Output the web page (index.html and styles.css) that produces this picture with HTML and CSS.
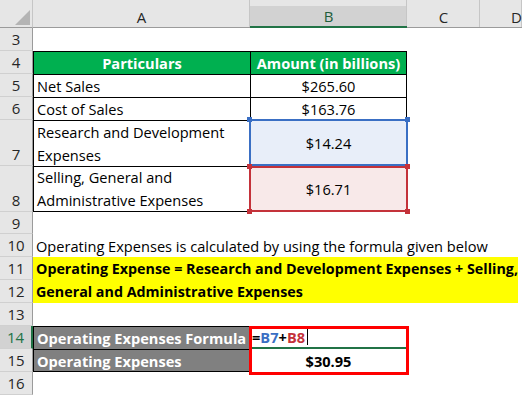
FILE: index.html
```html
<!DOCTYPE html>
<html>
<head>
<meta charset="utf-8">
<link rel="stylesheet" href="styles.css">
</head>
<body>
<div class="sheet">
  <div class="corner"><div class="tri"></div></div>
  <div class="colhead">A</div>
  <div class="colhead sel">B</div>
  <div class="colhead">C</div>
  <div class="colhead last">D</div>

  <div class="rh">3</div><div class="row-empty"></div>

  <div class="rh">4</div>
  <div class="cell th bl bt">Particulars</div>
  <div class="cell th bl bt br">Amount (in billions)</div>
  <div class="filler2"></div>

  <div class="rh">5</div>
  <div class="cell bl bt">Net Sales</div>
  <div class="cell c bl bt br">$265.60</div>
  <div class="filler2"></div>

  <div class="rh">6</div>
  <div class="cell bl bt">Cost of Sales</div>
  <div class="cell c bl bt br">$163.76</div>
  <div class="filler2"></div>

  <div class="rh bottom">7</div>
  <div class="cell wrap bl bt">Research and Development<br>Expenses</div>
  <div class="cell c ref blue">$14.24<i class="h tl"></i><i class="h tr"></i></div>
  <div class="filler2"></div>

  <div class="rh bottom">8</div>
  <div class="cell wrap bl bt bb">Selling, General and<br>Administrative Expenses</div>
  <div class="cell c ref red">$16.71<i class="h tl"></i><i class="h tr"></i><i class="h bl2"></i><i class="h br2"></i></div>
  <div class="filler2"></div>

  <div class="rh">9</div><div class="row-empty"></div>

  <div class="rh">10</div>
  <div class="cell span">Operating Expenses is calculated by using the formula given below</div>

  <div class="rh">11</div>
  <div class="cell span yellow b">Operating Expense = Research and Development Expenses + Selling,</div>
  <div class="rh">12</div>
  <div class="cell span yellow b">General and Administrative Expenses</div>

  <div class="rh">13</div><div class="row-empty"></div>

  <div class="rh active">14</div>
  <div class="cell gray bl bt br">Operating Expenses Formula</div>
  <div class="cell edit"><span class="eq">=</span><span class="rb">B7</span><span class="eq">+</span><span class="rr">B8</span><span class="caret"></span></div>
  <div class="filler2"></div>

  <div class="rh">15</div>
  <div class="cell gray bl bt bb br">Operating Expenses</div>
  <div class="cell c b">$30.95</div>
  <div class="filler2"></div>

  <div class="rh">16</div><div class="row-empty"></div>

  <div class="redbox"></div>
</div>
</body>
</html>
```

FILE: styles.css
```css
html, body {
  margin: 0;
  padding: 0;
  background: #ffffff;
}
body {
  font-family: "Open Sans", "Liberation Sans", sans-serif;
  font-size: 14.6px;
  color: #000;
  width: 522px;
  height: 395px;
  overflow: hidden;
}
.sheet {
  position: relative;
  display: grid;
  grid-template-columns: 33px 217px 157px 73px 42px;
  grid-template-rows: 28px 23px 23px 23px 23px 46px 46px 22px 23px 23px 23px 23px 23px 23px 23px;
}
.corner {
  background: #e6e6e6;
  border-right: 1px solid #c6c6c6;
  border-bottom: 1px solid #9b9b9b;
  box-sizing: border-box;
  position: relative;
}
.tri {
  position: absolute;
  left: 15px;
  top: 10px;
  width: 0;
  height: 0;
  border-left: 15px solid transparent;
  border-bottom: 15px solid #b4b4b4;
}
.colhead {
  background: #e6e6e6;
  border-bottom: 1px solid #9b9b9b;
  box-shadow: inset -1px 0 0 #c6c6c6;
  box-sizing: border-box;
  display: flex;
  align-items: center;
  justify-content: center;
  padding-top: 6px;
  color: #262626;
  font-size: 15px;
}
.colhead.sel {
  background: linear-gradient(#e6e6e6 0 6px, #d2d2d2 6px);
  border-bottom: 2px solid #217346;
  color: #1f5e3b;
}
.colhead.last {
  justify-content: flex-start;
  padding-left: 31px;
}
.rh {
  background: #e6e6e6;
  border-right: 1px solid #9b9b9b;
  border-bottom: 1px solid #d0d0d0;
  box-sizing: border-box;
  display: flex;
  align-items: center;
  justify-content: center;
  color: #262626;
  font-size: 15px;
}
.rh.bottom {
  align-items: flex-end;
  padding-bottom: 1px;
}
.rh.active {
  background: #d2d2d2;
  border-right: 2px solid #217346;
  color: #217346;
}
.row-empty {
  grid-column: 2 / 6;
}
.filler2 {
  grid-column: 4 / 6;
}
.cell {
  box-sizing: border-box;
  display: flex;
  align-items: center;
  padding: 0 3px;
  white-space: nowrap;
  position: relative;
}
.cell.c {
  justify-content: center;
}
.cell.wrap {
  white-space: normal;
  line-height: 23px;
}
.bl { border-left: 1px solid #000; }
.bt { border-top: 1px solid #000; }
.br { border-right: 1px solid #000; }
.bb { border-bottom: 1px solid #000; }
.th {
  background: #00b050;
  color: #fff;
  font-weight: bold;
  justify-content: center;
}
.b { font-weight: bold; }
.span {
  grid-column: 2 / 6;
}
.yellow {
  background: #ffff00;
  margin-right: 4px;
  font-size: 14.3px;
}
.gray {
  background: #808080;
  color: #fff;
  font-weight: bold;
}
.ref {
  border: 2px solid;
  margin: 0 -1px 0 -1px;
}
.blue {
  border-color: #3a6fc4;
  background: #e8eef9;
  margin-top: -1px;
}
.red {
  border-color: #c4323a;
  background: #f8e9e9;
}
.h {
  position: absolute;
  width: 5px;
  height: 5px;
  display: block;
}
.blue .h { background: #3a6fc4; }
.red .h { background: #c4323a; }
.h.tl { left: -4px; top: -4px; }
.h.tr { right: -4px; top: -4px; }
.h.bl2 { left: -4px; bottom: -4px; }
.h.br2 { right: -4px; bottom: -4px; }
.edit {
  font-weight: bold;
  padding-left: 2px;
  border-bottom: 2px solid #217346;
}
.eq { color: #000; }
.rb { color: #3a6fc4; }
.rr { color: #c4323a; }
.caret {
  display: inline-block;
  width: 1px;
  height: 17px;
  background: #000;
  margin-left: 2px;
}
.redbox {
  position: absolute;
  left: 249px;
  top: 326px;
  width: 160px;
  height: 49px;
  border: 3px solid #ff0000;
  box-sizing: border-box;
  pointer-events: none;
}
```
